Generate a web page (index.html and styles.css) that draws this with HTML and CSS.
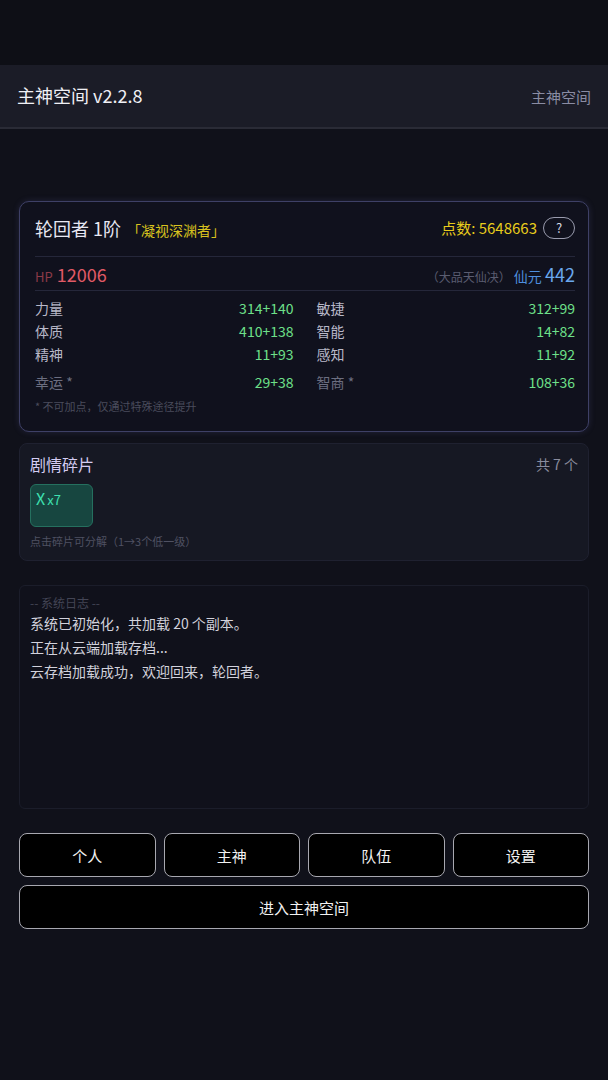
FILE: index.html
```html
<!DOCTYPE html>
<html>
<head>
  <title>主神空间</title>
  <link rel="stylesheet" href="styles.css">
</head>
<body>
  <div class="topbar"></div>
  <div class="header">
    <h1>主神空间 v2.2.8</h1>
    <span class="header-link">主神空间</span>
  </div>

  <div class="main">
    <div class="card hero">
      <div class="hero-top">
        <div class="name">轮回者 1阶 <span class="title">「凝视深渊者」</span></div>
        <div class="points">点数: 5648663 <button class="help">?</button></div>
      </div>
      <div class="hero-hp">
        <div class="hp"><span class="hp-label">HP</span> 12006</div>
        <div class="xian"><span class="xian-src">（大品天仙决）</span> 仙元 <span class="xian-val">442</span></div>
      </div>
      <div class="stats">
        <div class="stat"><span>力量</span><span class="val">314+140</span></div>
        <div class="stat"><span>敏捷</span><span class="val">312+99</span></div>
        <div class="stat"><span>体质</span><span class="val">410+138</span></div>
        <div class="stat"><span>智能</span><span class="val">14+82</span></div>
        <div class="stat"><span>精神</span><span class="val">11+93</span></div>
        <div class="stat"><span>感知</span><span class="val">11+92</span></div>
        <div class="stat special"><span>幸运 *</span><span class="val">29+38</span></div>
        <div class="stat special"><span>智商 *</span><span class="val">108+36</span></div>
      </div>
      <div class="note">* 不可加点，仅通过特殊途径提升</div>
    </div>

    <div class="card shards">
      <div class="shards-top">
        <h2>剧情碎片</h2>
        <span class="count">共 7 个</span>
      </div>
      <div class="chip"><span class="chip-name">X</span><span class="chip-num">x7</span></div>
      <div class="shard-note">点击碎片可分解（1→3个低一级）</div>
    </div>

    <div class="log">
      <div class="log-head">-- 系统日志 --</div>
      <div class="log-line">系统已初始化，共加载 20 个副本。</div>
      <div class="log-line">正在从云端加载存档...</div>
      <div class="log-line">云存档加载成功，欢迎回来，轮回者。</div>
    </div>

    <div class="actions">
      <button class="btn">个人</button>
      <button class="btn">主神</button>
      <button class="btn">队伍</button>
      <button class="btn">设置</button>
    </div>
    <button class="btn wide">进入主神空间</button>
  </div>
</body>
</html>
```

FILE: styles.css
```css
body {
  margin: 0;
  background-color: #10111a;
  font-family: 'Noto Sans CJK SC', 'Noto Sans', sans-serif;
  color: #e4e4ee;
}
.topbar {
  height: 65px;
  background-color: #0e0f16;
}
.header {
  height: 62px;
  display: flex;
  align-items: center;
  justify-content: space-between;
  padding: 0 17px;
  background-color: #1b1c27;
  border-bottom: 2px solid #2a2b36;
}
.header h1 {
  margin: 0;
  font-size: 18px;
  font-weight: normal;
  color: #f0f0f5;
  position: relative;
  top: -1px;
}
.header-link {
  font-size: 15px;
  color: #8a8ca3;
}
.main {
  padding: 72px 19px 40px 19px;
  display: flex;
  flex-direction: column;
}
.card {
  border-radius: 10px;
}
.hero {
  border: 1px solid #3e4066;
  background-color: #10111d;
  padding: 10px 13px 17px 15px;
  box-shadow: 0 0 6px rgba(90, 90, 160, 0.25);
}
.hero-top {
  display: flex;
  justify-content: space-between;
  align-items: center;
  height: 31px;
  padding-bottom: 13px;
  border-bottom: 1px solid #25273a;
}
.name {
  font-size: 18px;
  color: #e8e8f2;
}
.title {
  font-size: 14px;
  color: #d8c21e;
  margin-left: 2px;
}
.points {
  font-size: 15px;
  color: #e8cc1c;
  display: flex;
  align-items: center;
}
.help {
  margin-left: 6px;
  width: 32px;
  height: 22px;
  border: 1px solid #9a9cae;
  border-radius: 11px;
  background: transparent;
  color: #d8d8e4;
  font-size: 13px;
  padding: 0;
  font-family: inherit;
}
.hero-hp {
  display: flex;
  justify-content: space-between;
  align-items: center;
  height: 33px;
  border-bottom: 1px solid #25273a;
}
.hp {
  font-size: 18px;
  color: #e05a66;
}
.hp-label {
  font-size: 13px;
  color: #8c3a48;
}
.xian {
  font-size: 14px;
  color: #4e8ede;
}
.xian-src {
  font-size: 12px;
  color: #5a5c70;
}
.xian-val {
  font-size: 18px;
  color: #6aa8ee;
}
.stats {
  display: grid;
  grid-template-columns: 1fr 1fr;
  column-gap: 23px;
  padding-top: 6px;
}
.stat {
  display: flex;
  justify-content: space-between;
  font-size: 14px;
  line-height: 23px;
  color: #b8b8c8;
}
.stat .val {
  color: #6ee08a;
}
.stat.special {
  margin-top: 5px;
  color: #6c6e80;
}
.note {
  font-size: 11px;
  color: #4a4c5c;
  margin-top: 4px;
}
.shards {
  margin-top: 11px;
  background-color: #161823;
  border: 1px solid #1f2130;
  border-radius: 8px;
  padding: 8px 10px 11px 10px;
}
.shards-top {
  display: flex;
  justify-content: space-between;
  align-items: center;
}
.shards h2 {
  margin: 0;
  font-size: 16px;
  font-weight: normal;
  color: #d4ccf2;
}
.count {
  font-size: 14px;
  color: #8a8c9e;
}
.chip {
  margin-top: 8px;
  width: 63px;
  height: 43px;
  box-sizing: border-box;
  background-color: #174640;
  border: 1px solid #25705f;
  border-radius: 6px;
  padding: 1px 5px;
  color: #3ee0b0;
  line-height: 24px;
}
.chip-name {
  font-size: 16px;
}
.chip-num {
  font-size: 13px;
  margin-left: 2px;
}
.shard-note {
  margin-top: 6px;
  font-size: 11px;
  color: #4f5162;
}
.log {
  margin-top: 24px;
  height: 224px;
  box-sizing: border-box;
  background-color: #10111b;
  border: 1px solid #1b1d2a;
  border-radius: 6px;
  padding: 9px 10px;
}
.log-head {
  font-size: 12px;
  color: #434555;
  line-height: 16px;
}
.log-line {
  font-size: 14px;
  color: #d2d2dc;
  line-height: 24px;
}
.actions {
  margin-top: 24px;
  display: grid;
  grid-template-columns: repeat(4, 1fr);
  gap: 8px;
}
.btn {
  height: 44px;
  background-color: #000;
  color: #f2f2f2;
  border: 1.5px solid #a8a8b0;
  border-radius: 8px;
  font-size: 15px;
  font-family: inherit;
  cursor: pointer;
}
.btn.wide {
  margin-top: 8px;
  width: 100%;
}
```
